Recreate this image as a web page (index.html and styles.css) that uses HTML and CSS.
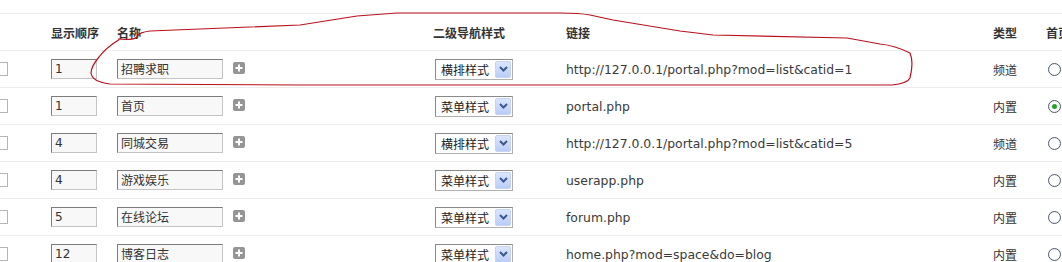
FILE: index.html
```html
<!DOCTYPE html>
<html lang="zh-CN">
<head>
<meta charset="utf-8">
<title>导航设置</title>
<link rel="stylesheet" href="styles.css">
</head>
<body>
<div class="page">
<table class="nav">
  <colgroup>
    <col class="c-chk"><col class="c-ord"><col class="c-name"><col class="c-sub"><col class="c-link"><col class="c-type"><col class="c-home">
  </colgroup>
  <thead>
    <tr>
      <th></th><th>显示顺序</th><th>名称</th><th>二级导航样式</th><th>链接</th><th>类型</th><th class="home-h">首页</th>
    </tr>
  </thead>
  <tbody>
    <tr>
      <td><span class="chk"></span></td>
      <td><span class="txt ord">1</span></td>
      <td><span class="txt name">招聘求职</span><svg class="plus" width="12" height="12" viewBox="0 0 12 12"><rect x="0" y="0" width="12" height="12" rx="2" fill="#959595"/><path d="M6 2.5v7M2.5 6h7" stroke="#fff" stroke-width="2"/></svg></td>
      <td><span class="sel">横排样式<span class="btn"><svg width="9" height="6" viewBox="0 0 9 6"><path d="M1 1l3.5 3.5L8 1" fill="none" stroke="#3d5a8c" stroke-width="2"/></svg></span></span></td>
      <td class="link">http://127.0.0.1/portal.php?mod=list&amp;catid=1</td>
      <td class="type">频道</td>
      <td><span class="radio"></span></td>
    </tr>
    <tr>
      <td><span class="chk"></span></td>
      <td><span class="txt ord">1</span></td>
      <td><span class="txt name">首页</span><svg class="plus" width="12" height="12" viewBox="0 0 12 12"><rect x="0" y="0" width="12" height="12" rx="2" fill="#959595"/><path d="M6 2.5v7M2.5 6h7" stroke="#fff" stroke-width="2"/></svg></td>
      <td><span class="sel">菜单样式<span class="btn"><svg width="9" height="6" viewBox="0 0 9 6"><path d="M1 1l3.5 3.5L8 1" fill="none" stroke="#3d5a8c" stroke-width="2"/></svg></span></span></td>
      <td class="link">portal.php</td>
      <td class="type">内置</td>
      <td><span class="radio on"></span></td>
    </tr>
    <tr>
      <td><span class="chk"></span></td>
      <td><span class="txt ord">4</span></td>
      <td><span class="txt name">同城交易</span><svg class="plus" width="12" height="12" viewBox="0 0 12 12"><rect x="0" y="0" width="12" height="12" rx="2" fill="#959595"/><path d="M6 2.5v7M2.5 6h7" stroke="#fff" stroke-width="2"/></svg></td>
      <td><span class="sel">横排样式<span class="btn"><svg width="9" height="6" viewBox="0 0 9 6"><path d="M1 1l3.5 3.5L8 1" fill="none" stroke="#3d5a8c" stroke-width="2"/></svg></span></span></td>
      <td class="link">http://127.0.0.1/portal.php?mod=list&amp;catid=5</td>
      <td class="type">频道</td>
      <td><span class="radio"></span></td>
    </tr>
    <tr>
      <td><span class="chk"></span></td>
      <td><span class="txt ord">4</span></td>
      <td><span class="txt name">游戏娱乐</span><svg class="plus" width="12" height="12" viewBox="0 0 12 12"><rect x="0" y="0" width="12" height="12" rx="2" fill="#959595"/><path d="M6 2.5v7M2.5 6h7" stroke="#fff" stroke-width="2"/></svg></td>
      <td><span class="sel">菜单样式<span class="btn"><svg width="9" height="6" viewBox="0 0 9 6"><path d="M1 1l3.5 3.5L8 1" fill="none" stroke="#3d5a8c" stroke-width="2"/></svg></span></span></td>
      <td class="link">userapp.php</td>
      <td class="type">内置</td>
      <td><span class="radio"></span></td>
    </tr>
    <tr>
      <td><span class="chk"></span></td>
      <td><span class="txt ord">5</span></td>
      <td><span class="txt name">在线论坛</span><svg class="plus" width="12" height="12" viewBox="0 0 12 12"><rect x="0" y="0" width="12" height="12" rx="2" fill="#959595"/><path d="M6 2.5v7M2.5 6h7" stroke="#fff" stroke-width="2"/></svg></td>
      <td><span class="sel">菜单样式<span class="btn"><svg width="9" height="6" viewBox="0 0 9 6"><path d="M1 1l3.5 3.5L8 1" fill="none" stroke="#3d5a8c" stroke-width="2"/></svg></span></span></td>
      <td class="link">forum.php</td>
      <td class="type">内置</td>
      <td><span class="radio"></span></td>
    </tr>
    <tr>
      <td><span class="chk"></span></td>
      <td><span class="txt ord">12</span></td>
      <td><span class="txt name">博客日志</span><svg class="plus" width="12" height="12" viewBox="0 0 12 12"><rect x="0" y="0" width="12" height="12" rx="2" fill="#959595"/><path d="M6 2.5v7M2.5 6h7" stroke="#fff" stroke-width="2"/></svg></td>
      <td><span class="sel">菜单样式<span class="btn"><svg width="9" height="6" viewBox="0 0 9 6"><path d="M1 1l3.5 3.5L8 1" fill="none" stroke="#3d5a8c" stroke-width="2"/></svg></span></span></td>
      <td class="link">home.php?mod=space&amp;do=blog</td>
      <td class="type">内置</td>
      <td><span class="radio"></span></td>
    </tr>
  </tbody>
</table>
<svg class="scribble" width="1062" height="262" viewBox="0 0 1062 262">
  <path d="M120 39 C112 44 104 50 99 57 C94 63 91 68 91 73 C92 79 97 82 110 84 L300 85 L600 85 L892 85 C903 84 908 82 910 78 C912 70 913 60 910 53 C900 48 890 45 880 44 L847 38 L713 35 L680 31 L613 20 L590 15 C580 13 570 13 560 13 L397 13 L357 16 L300 25 L150 31 C143 32 139 33 137 37 C134 40 128 40 118 39" fill="none" stroke="#b8101c" stroke-width="1.2" stroke-linejoin="round"/>
</svg>
</div>
</body>
</html>
```
FILE: styles.css
```css
html, body {
  margin: 0;
  padding: 0;
  background: #fff;
}
.page {
  position: relative;
  width: 1062px;
  height: 262px;
  overflow: hidden;
}
.nav {
  border-collapse: collapse;
  table-layout: fixed;
  width: 1110px;
  margin-top: 13px;
  font-family: "DejaVu Sans", "Noto Sans CJK SC", sans-serif;
  font-size: 12px;
  color: #333;
}
.c-chk { width: 51px; }
.c-ord { width: 66px; }
.c-name { width: 316px; }
.c-sub { width: 133px; }
.c-link { width: 427px; }
.c-type { width: 53px; }
.c-home { width: 64px; }
.nav tr {
  border-top: 1px solid #ececec;
}
.nav th {
  height: 36px;
  padding: 0;
  text-align: left;
  font-weight: bold;
  font-family: "Noto Sans CJK SC", sans-serif;
  color: #333;
  white-space: nowrap;
  overflow: hidden;
}
.nav td {
  height: 36px;
  padding: 0;
  white-space: nowrap;
  vertical-align: middle;
}
.link {
  font-size: 12.4px;
  color: #3a3a3a;
}
.type {
  font-family: "Noto Sans CJK SC", sans-serif;
}
.chk {
  display: inline-block;
  vertical-align: middle;
  width: 12px;
  height: 12px;
  margin-left: -6px;
  border: 1px solid #b5b5b5;
  background: #fff;
}
.txt {
  display: inline-block;
  vertical-align: middle;
  box-sizing: border-box;
  height: 20px;
  line-height: 18px;
  padding-left: 3px;
  border: 1px solid #c4c4c4;
  border-top-color: #7c7c7c;
  border-left-color: #7c7c7c;
  background: #f8f8f8;
  color: #333;
}
.ord { width: 46px; }
.name {
  width: 106px;
  font-family: "Noto Sans CJK SC", sans-serif;
}
.plus {
  vertical-align: middle;
  margin-left: 10px;
  position: relative;
  top: -1px;
}
.sel {
  display: inline-flex;
  align-items: center;
  justify-content: space-between;
  vertical-align: middle;
  box-sizing: border-box;
  width: 78px;
  height: 21px;
  margin-left: 2px;
  padding: 0 1px 0 5px;
  border: 1px solid #8a8a8a;
  border-right-color: #b0b0b0;
  border-bottom-color: #b0b0b0;
  background: #fff;
  font-family: "Noto Sans CJK SC", sans-serif;
  color: #222;
}
.btn {
  display: inline-flex;
  align-items: center;
  justify-content: center;
  width: 16px;
  height: 17px;
  box-sizing: border-box;
  border: 1px solid #c6d3f5;
  border-radius: 2px;
  background: linear-gradient(#dbe6fe, #b9cdf8);
}
.radio {
  display: inline-block;
  vertical-align: middle;
  width: 11px;
  height: 11px;
  margin-left: 2px;
  border: 1px solid #4d5b73;
  border-radius: 50%;
  background: radial-gradient(circle, #fff 50%, #e4e4e4 100%);
  position: relative;
}
.radio.on::after {
  content: "";
  position: absolute;
  left: 3px;
  top: 3px;
  width: 5px;
  height: 5px;
  border-radius: 50%;
  background: #2aa12a;
}
.scribble {
  position: absolute;
  left: 0;
  top: 0;
  pointer-events: none;
}
```
